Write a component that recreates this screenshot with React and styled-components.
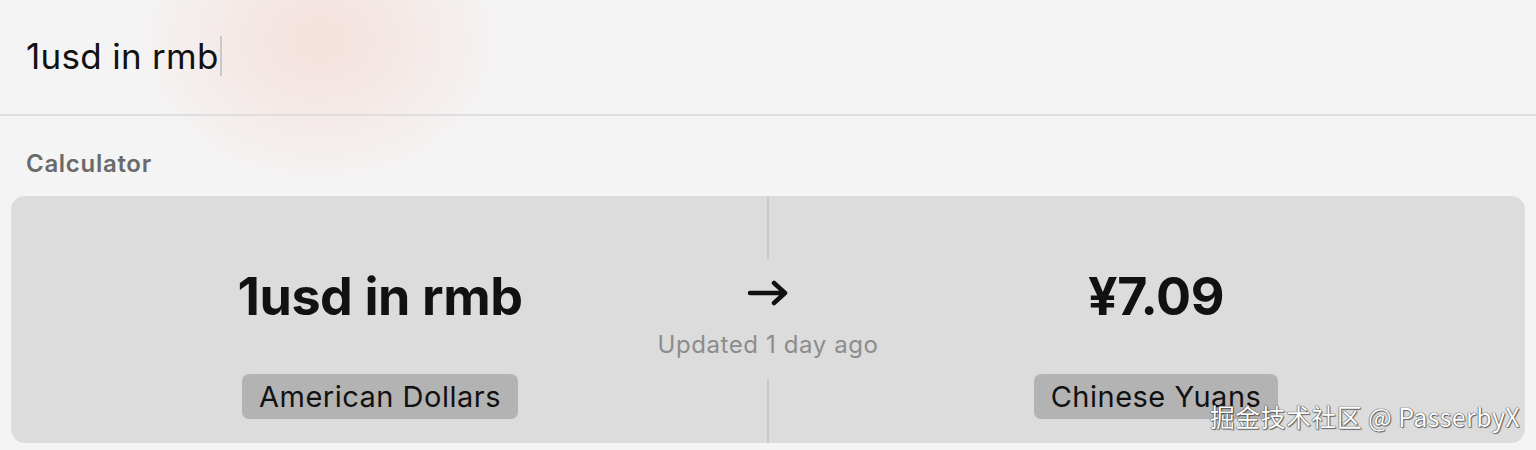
import styled, { createGlobalStyle } from "styled-components";

const GlobalStyle = createGlobalStyle`
  body {
    margin: 0;
    background: #f3f3f3;
    font-family: Inter, "Noto Sans", "Noto Sans CJK SC", sans-serif;
    overflow: hidden;
  }
`;

const Window = styled.div`
  position: relative;
  width: 1536px;
  height: 450px;
  background:
    radial-gradient(ellipse 190px 150px at 320px 40px, rgba(245, 208, 200, 0.55), rgba(246, 215, 208, 0) 100%),
    #f4f4f4;
  overflow: hidden;
`;

const SearchBar = styled.div`
  display: flex;
  align-items: center;
  height: 114px;
  padding: 0 26px;
  border-bottom: 2px solid #dedede;
  box-sizing: content-box;
`;

const Query = styled.span`
  font-size: 35px;
  color: #111;
  letter-spacing: 0.3px;
  margin-top: -3px;
`;

const Caret = styled.span`
  display: inline-block;
  width: 2px;
  height: 40px;
  background: #c9c9c9;
  margin-left: 1px;
  margin-top: -2px;
`;

const SectionLabel = styled.div`
  padding: 33px 26px 0;
  height: 47px;
  font-size: 24px;
  font-weight: 600;
  color: #6a6a6a;
  letter-spacing: 0.7px;
`;

const Card = styled.div`
  margin: 0 11px;
  height: 247px;
  border-radius: 14px;
  background: #dcdcdc;
  display: grid;
  grid-template-columns: 1fr 38px 1fr;
`;

const Side = styled.div`
  display: flex;
  flex-direction: column;
  align-items: center;
  padding-top: 67px;
`;

const Value = styled.div`
  font-size: 52px;
  line-height: 67px;
  font-weight: 700;
  color: #111;
  letter-spacing: -0.4px;
`;

const Badge = styled.div`
  margin-top: 44px;
  height: 45px;
  padding: 0 17px;
  display: flex;
  align-items: center;
  border-radius: 7px;
  background: #b3b3b3;
  font-size: 29px;
  letter-spacing: 0.5px;
  color: #111;
`;

const Middle = styled.div`
  display: flex;
  flex-direction: column;
  align-items: center;
`;

const Rule = styled.div`
  flex: 1;
  width: 2px;
  background: #cacaca;
`;

const Centre = styled.div`
  display: flex;
  flex-direction: column;
  align-items: center;
  padding: 20px 0;
  white-space: nowrap;
`;

const Updated = styled.div`
  margin-top: 24px;
  font-size: 24px;
  line-height: 29px;
  letter-spacing: 0.6px;
  color: #8c8c8c;
`;

const Watermark = styled.div`
  position: absolute;
  right: 16px;
  bottom: 16px;
  font-size: 25px;
  color: #fff;
  font-family: "Noto Sans CJK SC", "Noto Sans", sans-serif;
  text-shadow: 0 0 1px #333, 0 0 1px #333, 1px 1px 1px rgba(0, 0, 0, 0.5);
  letter-spacing: 0.4px;
`;

const Arrow = () => (
  <svg width="42" height="26" viewBox="0 0 42 26" fill="none">
    <path d="M3 13h35M27 3l11 10-11 10" stroke="#111" strokeWidth="4.5" strokeLinecap="round" strokeLinejoin="round" />
  </svg>
);

export default function App() {
  return (
    <>
      <GlobalStyle />
      <Window>
        <SearchBar>
          <Query>1usd in rmb</Query>
          <Caret />
        </SearchBar>
        <SectionLabel>Calculator</SectionLabel>
        <Card>
          <Side>
            <Value>1usd in rmb</Value>
            <Badge>American Dollars</Badge>
          </Side>
          <Middle>
            <Rule />
            <Centre>
              <Arrow />
              <Updated>Updated 1 day ago</Updated>
            </Centre>
            <Rule />
          </Middle>
          <Side>
            <Value>¥7.09</Value>
            <Badge>Chinese Yuans</Badge>
          </Side>
        </Card>
        <Watermark>掘金技术社区 @ PasserbyX</Watermark>
      </Window>
    </>
  );
}
